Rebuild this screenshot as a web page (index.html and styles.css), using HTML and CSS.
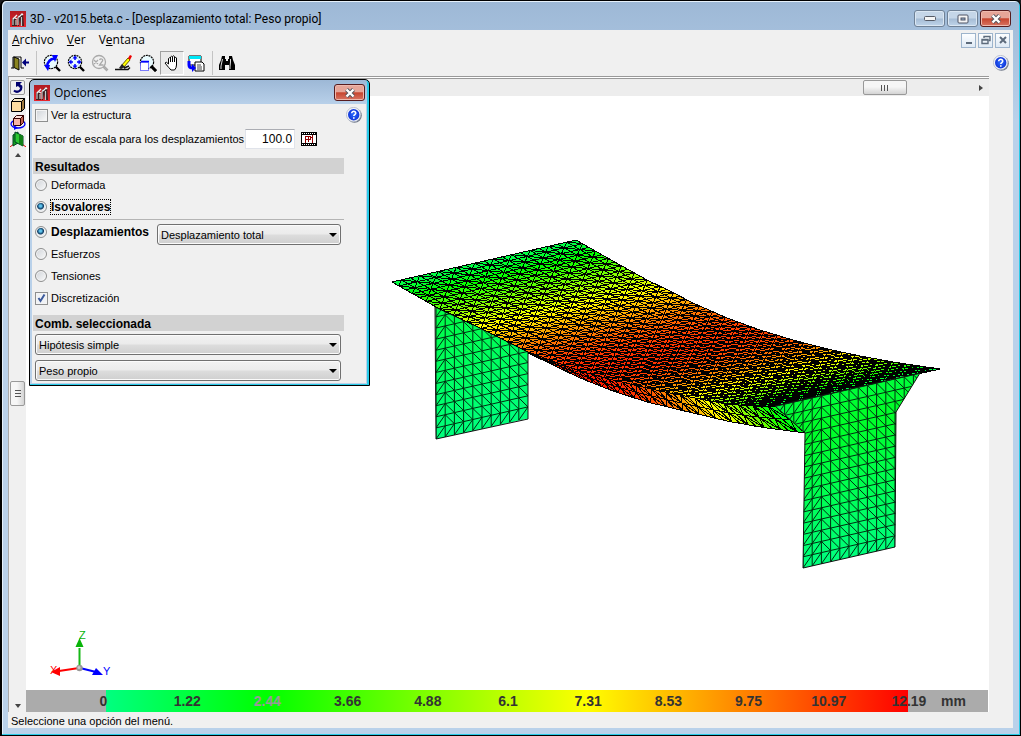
FILE: index.html
```html
<!DOCTYPE html>
<html lang="es">
<head>
<meta charset="utf-8">
<title>3D - v2015.beta.c</title>
<link rel="stylesheet" href="styles.css">
</head>
<body>
<svg class="defs" aria-hidden="true">
  <defs>
    <linearGradient id="red" x2="0" y2="1"><stop offset="0" stop-color="#b01c22"/><stop offset="1" stop-color="#e8242c"/></linearGradient>
    <radialGradient id="blue"><stop offset="0" stop-color="#2a6cff"/><stop offset="1" stop-color="#1236d8"/></radialGradient>
    <symbol id="logo" viewBox="0 0 16 16">
      <rect width="16" height="16" fill="url(#red)"/>
      <path d="M2 15V8l2-2 2 1 1 8zM8 15V6l2-3 3 0 1 12h-3l-1-6-1 6z" fill="#3b2022"/>
      <path d="M3 14V8l1-1M6 9v5M8 14V7l1-2M11.500 6v9" fill="none" stroke="#c4cccc" stroke-width="1.200"/>
      <path d="M3 8l4-4M5 7l2 1M9 6l3-3 1 1" fill="none" stroke="#eef2f2" stroke-width="1.300"/>
    </symbol>
    <symbol id="help" viewBox="0 0 16 16">
      <circle cx="8.5" cy="8.5" r="7.3" fill="#707888"/>
      <circle cx="7.6" cy="7.6" r="7.2" fill="#f2f4fa" stroke="#a8b0c0" stroke-width=".7"/>
      <circle cx="7.7" cy="7.7" r="5.7" fill="url(#blue)"/>
      <path d="M5.7 6.2c0-2.6 4.2-2.4 4 0-.1 1.4-1.9 1.3-1.9 2.9M7.8 10.3v1.5" fill="none" stroke="#fff" stroke-width="1.6"/>
    </symbol>
    <symbol id="cross" viewBox="0 0 12 10">
      <path d="M2.5 1.5l7 7m0-7l-7 7" stroke="#52555e" stroke-width="4.2"/>
      <path d="M2.5 1.5l7 7m0-7l-7 7" stroke="#fff" stroke-width="2.4"/>
    </symbol>
    <symbol id="lens" viewBox="0 0 18 18">
      <path d="M12 12l5 5" stroke="#000" stroke-width="2.4"/>
      <circle cx="8" cy="8" r="6.6" fill="#e9fbff" stroke="#000" stroke-width="1.2" stroke-dasharray="2 .7"/>
    </symbol>
  </defs>
</svg>
<div class="window">
  <header class="titlebar">
    <svg class="i16"><use href="#logo"/></svg>
    <h1>3D - v2015.beta.c - [Desplazamiento total: Peso propio]</h1>
    <div class="winbtns">
      <button class="wb" aria-label="Minimizar"><svg width="12" height="6"><rect x=".5" y=".5" width="11" height="4" rx="1" fill="#f5f5f5" stroke="#565b66"/></svg></button>
      <button class="wb" aria-label="Maximizar"><svg width="12" height="10"><rect x="1" y="1" width="10" height="8" rx="1" fill="#f5f5f5" stroke="#4c5264"/><rect x="4" y="4" width="4" height="2" fill="#9eb6d0" stroke="#4c5264"/></svg></button>
      <button class="wb close" aria-label="Cerrar"><svg width="12" height="10"><use href="#cross"/></svg></button>
    </div>
  </header>
  <div class="client">
    <nav class="menu">
      <a href="#archivo"><u>A</u>rchivo</a><a href="#ver"><u>V</u>er</a><a href="#ventana">V<u>e</u>ntana</a>
      <div class="mdi">
        <button aria-label="Minimizar documento"><svg width="12" height="12"><path d="M3 9h6" stroke="#5d6b7c" stroke-width="2"/></svg></button>
        <button aria-label="Restaurar documento"><svg width="12" height="12" fill="none" stroke="#5d6b7c"><path d="M4 4V2.500h6v4H8.500M4 2.500h6" stroke-width="1.400"/><path d="M2 5.500h6v4H2zM2 6h6" stroke-width="1.400"/></svg></button>
        <button aria-label="Cerrar documento"><svg width="12" height="12"><path d="M3 3l6 6m0-6l-6 6" stroke="#5d6b7c" stroke-width="2"/></svg></button>
      </div>
    </nav>
    <div class="tools">
      <button aria-label="Salir"><svg width="18" height="18"><path d="M2 14V3h8v11" fill="#fff" stroke="#000"/><path d="M3 3l5 2v11l-5-2.500z" fill="#8a8420" stroke="#000"/><path d="M0 14h3M10 14h3" stroke="#000"/><path d="M11 8.500l4-4v3h3v2h-3v3z" fill="#00007c"/></svg></button>
      <span class="sep"></span>
      <button aria-label="Vista anterior"><svg width="18" height="18"><use href="#lens"/><path d="M4 13C4 8 8 4 12 5" fill="none" stroke="#00f" stroke-width="2.500"/><path d="M9 1h6l-3 7zM1 11h6l-2 6z" fill="#00f"/></svg></button>
      <button aria-label="Ver todo"><svg width="18" height="18"><use href="#lens"/><path d="M8 3v3M8 10v3M3 8h3M10 8h3" stroke="#00f" stroke-width="1.500"/><path d="M8 1.500l2.500 3h-5zM8 14.500l2.500-3h-5zM1.500 8l3-2.500v5zM14.500 8l-3-2.500v5z" fill="#00f"/></svg></button>
      <button aria-label="Zoom doble"><svg width="18" height="18" fill="none" stroke="#a9a9a9" stroke-width="1.300"><circle cx="8" cy="8" r="6.500"/><path d="M12 13l4 4M13 12l4 4M3 6l4 4m0-4l-4 4M8.500 6c1-2 4-1 3 1l-3 4h4"/></svg></button>
      <button aria-label="Redibujar"><svg width="18" height="18"><path d="M6 12l7-8 2 2-6 7z" fill="#ff0" stroke="#665c00"/><path d="M13 4l2-3 2 1-2 4z" fill="#e00"/><path d="M4 14l3-4 3 3-4 2z" fill="#222"/><path d="M0 15.500h13l2-2M9 14l5-2" fill="none" stroke="#111" stroke-width="1.400"/></svg></button>
      <button aria-label="Zoom ventana"><svg width="18" height="18"><use href="#lens"/><path d="M12 12l5 5" stroke="#000" stroke-width="3"/><rect x="1.500" y="8.500" width="8" height="8" fill="#fff" stroke="#00f" stroke-dasharray="1 1"/><path d="M2 7.500h8" stroke="#00f" stroke-width="1.500"/></svg></button>
      <button class="on" aria-label="Mover"><svg width="18" height="18"><path d="M5.500 10V4.500q1-1.500 2 0V3q1-1.500 2 0v-.500q1-1.500 2 0V4q1.500-1.500 2 0v7q0 3-2 5H8q-2-2-6-7 1-2 3.500 1M7.500 4v4M9.500 3v5M11.500 4v4" fill="#fff" stroke="#000"/></svg></button>
      <button aria-label="Copiar vista"><svg width="18" height="18"><path d="M2 2h12v9H2z" fill="#fff" stroke="#000"/><path d="M2 2h12v3H2z" fill="#00e8f8"/><path d="M8 8h7l2 2v7H8z" fill="#fff" stroke="#000"/><path d="M10 11h4M10 13h5M10 15h5" stroke="#444"/><path d="M2 7v4q0 3 4 3" fill="none" stroke="#00f" stroke-width="3"/><path d="M5 10l4 4-4 4z" fill="#00f"/></svg></button>
      <span class="sep"></span>
      <button aria-label="Buscar"><svg width="18" height="18"><path d="M3 2h3v3h1v2h2V5h1V2h3l1 4 2 5v5h-6v-5H6v5H0v-5l2-5z" fill="#000"/><path d="M3.500 5L2 12v3M11.500 5v3l-.5 5v2" fill="none" stroke="#ddd"/></svg></button>
      <button class="helpbtn" aria-label="Ayuda"><svg class="i16"><use href="#help"/></svg></button>
    </div>
    <div class="work">
      <aside class="side">
        <button aria-label="Girar"><svg width="13" height="13"><path d="M3 9.500q3 2.500 6 0 2-2 1-5" fill="none" stroke="#00006e" stroke-width="2.200"/><path d="M5 6V1h6L9 3l2 2-2 2-2-2z" fill="#00006e"/></svg></button>
        <button aria-label="Vista isométrica"><svg width="16" height="16" stroke="#000"><path d="M1.500 4.500h10v10h-10z" fill="#ffdda0"/><path d="M1.500 4.500l3-3h10l-3 3z" fill="#f6e6c4"/><path d="M11.500 4.500l3-3v10l-3 3z" fill="#a07a40"/></svg></button>
        <button aria-label="Girar modelo"><svg width="16" height="16"><ellipse cx="8" cy="10" rx="7" ry="4" fill="none" stroke="#00f" stroke-width="1.300"/><path d="M3.500 4.500h7v7h-7z" fill="#f7b4a8" stroke="#300"/><path d="M3.500 4.500l3-3h7l-3 3z" fill="#ffe0d8" stroke="#300"/><path d="M10.500 4.500l3-3v7l-3 3z" fill="#c06050" stroke="#300"/><path d="M4 11l4 3-4 2z" fill="#00f"/></svg></button>
        <button aria-label="Vista 3D"><svg width="16" height="16"><path d="M0 16l5-4M16 16l-4-3" stroke="#e00"/><path d="M3 4l5-3v11l-5 3z" fill="#18a020" stroke="#042"/><path d="M5 1l8 4v10l-8-4z" fill="#2cc832" stroke="#042"/><path d="M9 3l4 2v10l-4-2z" fill="#128018"/></svg></button>
        <span class="arr up"></span>
        <span class="vthumb"></span>
        <span class="arr down"></span>
      </aside>
      <main class="view">
        <div class="hbar"><span class="hthumb"></span><span class="arr right"></span></div>
        <div class="stage">
          <svg id="model" viewBox="26 96 963 594" preserveAspectRatio="xMinYMin meet" role="img" aria-label="Modelo deformado">
            <g font-family="Liberation Sans, sans-serif" font-size="11">
              <path d="M79.500 667V648" stroke="#18b818" stroke-width="2"/><path d="M79.500 638l4 9h-8z" fill="#08b408"/>
              <path d="M79 668l-20 3" stroke="#f00" stroke-width="2"/><path d="M51 672l9-5v9z" fill="#f00"/>
              <path d="M80 668l16 4" stroke="#00f" stroke-width="2"/><path d="M103 675l-7-7-4 7z" fill="#00f"/>
              <circle cx="79.500" cy="668" r="3.200" fill="#999"/><circle cx="79" cy="667.500" r="1.500" fill="#ccc"/>
              <text x="79" y="639" fill="#08b408">Z</text><text x="50" y="674" fill="#f00">X</text><text x="103" y="675" fill="#00f">Y</text>
            </g>
          </svg>
        </div>
        <div class="bar">
          <div class="scale"><div class="ticks"><span class="zero">0</span><span>1.22</span><span class="dim">2.44</span><span>3.66</span><span>4.88</span><span>6.1</span><span>7.31</span><span>8.53</span><span>9.75</span><span>10.97</span><span>12.19</span></div></div>
          <span class="unit">mm</span>
        </div>
      </main>
    </div>
    <footer class="status">Seleccione una opción del menú.</footer>
  </div>
</div>

<section class="dialog" aria-label="Opciones">
  <header class="dtitle"><svg class="i16"><use href="#logo"/></svg><h2>Opciones</h2><button class="wb close" aria-label="Cerrar opciones"><svg width="12" height="10"><use href="#cross"/></svg></button></header>
  <form class="dbody">
    <div class="row"><label><input type="checkbox">Ver la estructura</label><button type="button" class="dhelp" aria-label="Ayuda de opciones"><svg class="i16"><use href="#help"/></svg></button></div>
    <div class="row factor"><label for="f">Factor de escala para los desplazamientos</label><input id="f" type="text" value="100.0">
      <button type="button" class="film" aria-label="Animación"><svg width="16" height="14" shape-rendering="crispEdges"><rect width="16" height="14" fill="#000"/><rect x="1" y="3" width="14" height="8" fill="#fff"/><path d="M1 1.500h14M1 12.500h14" stroke="#fff" stroke-dasharray="1 1"/><path d="M4.500 4v7M4 4.500h5M7.500 4v6M4 7.500h6M9.500 4v4M11.500 3v8M9 5.500h3" stroke="#900000" fill="none"/></svg></button></div>
    <h3 class="first">Resultados</h3>
    <div class="row"><label><input type="radio" name="r">Deformada</label></div>
    <div class="row"><label class="b"><input type="radio" name="r" checked><span class="focus">Isovalores</span></label></div>
    <hr>
    <div class="row"><label class="b"><input type="radio" name="d" checked>Desplazamientos</label>
      <span class="sel short"><select aria-label="Desplazamientos"><option>Desplazamiento total</option></select></span></div>
    <div class="row"><label><input type="radio" name="d">Esfuerzos</label></div>
    <div class="row"><label><input type="radio" name="d">Tensiones</label></div>
    <div class="row"><label><input type="checkbox" checked>Discretización</label></div>
    <h3 class="second">Comb. seleccionada</h3>
    <span class="sel"><select aria-label="Combinación"><option>Hipótesis simple</option></select></span>
    <span class="sel"><select aria-label="Hipótesis"><option>Peso propio</option></select></span>
  </form>
</section>
<script src="model.js"></script>
</body>
</html>
```
FILE: styles.css
```css
* { box-sizing: border-box; }
html, body { height: 100%; margin: 0; }
body { background: #1c1c20; font: 11px/14px "Liberation Sans", Arial, sans-serif; color: #000; }
button { padding: 0; border: 0; background: none; font: inherit; display: grid; place-items: center; }
svg { display: block; }
h1, h2, h3 { margin: 0; font-size: 12px; font-weight: 400; }
.defs { position: absolute; width: 0; height: 0; }
.i16 { width: 16px; height: 16px; flex: none; }

.window { height: 100vh; display: flex; flex-direction: column; padding: 0 7px 7px 6px; border: 1px solid #000; border-left-width: 2px; border-radius: 6px 6px 0 0; background: linear-gradient(#9db8d6, #b9d1ea 120px); box-shadow: inset -1px -1px #29cbe8, inset 1px 1px #e6f1fb; }
.titlebar { height: 29px; flex: none; display: flex; align-items: center; gap: 4px; padding: 6px 2px 0 2px; }
h2, .menu { font: 12px/16px "Open Sans", "Noto Sans", sans-serif; }
h1 { flex: 1; font: 12px/16px Roboto, "Open Sans", sans-serif; white-space: nowrap; }
.winbtns { display: flex; gap: 2px; }
.wb { width: 31px; height: 17px; border: 1px solid #6f8196; border-radius: 3px; background: linear-gradient(#c5d6e8 48%, #a5bcd5 52%, #bfd4ea); box-shadow: inset 0 0 0 1px #dbe7f3; }
.wb.close { border-color: #571c1e; background: linear-gradient(#e6a598 45%, #c6452f 52%, #d87463); box-shadow: inset 0 0 0 1px #eeb9ae; }

.client { flex: 1; min-height: 0; display: flex; flex-direction: column; background: #f0f0f0; }
.menu { height: 20px; flex: none; display: flex; align-items: center; gap: 13px; padding: 0 3px 0 4px; }
.menu a { color: #000; text-decoration: none; }
.mdi { display: flex; gap: 2px; margin-left: auto; }
.mdi button { width: 15px; height: 15px; border: 1px solid #9db4cc; background: linear-gradient(#fdfeff, #dfeaf5); }
.tools { height: 26px; flex: none; display: flex; align-items: center; padding: 0 4px 0 0; }
.tools button { width: 24px; height: 24px; flex: none; }
.tools .on { border: 1px solid #a0a0a0; border-right-color: #fff; border-bottom-color: #fff; background: #eaeaea; }
.sep { width: 8px; height: 24px; flex: none; background: linear-gradient(#c4c4c4, #c4c4c4) 4px 0 / 1px 100% no-repeat; }
.tools .helpbtn { width: 16px; margin-left: auto; }
.work { flex: 1; min-height: 0; display: flex; padding-right: 24px; }
.side { width: 18px; flex: none; display: flex; flex-direction: column; align-items: center; padding: 3px 0 4px; border-left: 1px solid #aaa; border-top: 1px solid #999; }
.side::before { content: ""; flex: 3; order: 1; }
.side::after { content: ""; flex: 4; order: 3; }
.side button { width: 16px; height: 17px; flex: none; }
.side button:first-child { width: 15px; height: 15px; border: 1px solid #999; border-radius: 2px; margin: 0 0 1px; }
.arr { width: 0; height: 0; flex: none; border: 3px solid transparent; }
.up { border-bottom: 4px solid #444; border-top: 0; margin-top: 6px; }
.down { border-top: 4px solid #444; border-bottom: 0; order: 4; }
.right { border-left: 4px solid #444; border-right: 0; margin-right: 6px; }
.vthumb { order: 2; width: 15px; height: 25px; flex: none; border: 1px solid #999; border-radius: 2px; background: linear-gradient(#555, #555) 4px 8px / 6px 1px no-repeat, linear-gradient(#555, #555) 4px 11px / 6px 1px no-repeat, linear-gradient(#555, #555) 4px 14px / 6px 1px no-repeat, linear-gradient(90deg, #f6f6f6 45%, #d4d4d4); }
.view { flex: 1; min-width: 0; display: flex; flex-direction: column; background: #fff; }
.hbar { height: 20px; flex: none; display: flex; align-items: center; justify-content: flex-end; border-top: 1px solid #999; box-shadow: inset 0 1px #fff, inset 0 2px #999; background: #ededed; padding-top: 2px; }
.hthumb { width: 44px; height: 15px; margin-right: 72px; border: 1px solid #999; border-radius: 2px; background: linear-gradient(#555, #555) 17px 4px / 1px 6px no-repeat, linear-gradient(#555, #555) 20px 4px / 1px 6px no-repeat, linear-gradient(#555, #555) 23px 4px / 1px 6px no-repeat, linear-gradient(#f6f6f6 45%, #d4d4d4); }
.stage { flex: 1; min-height: 0; }
.stage svg { width: 100%; height: 100%; }
.bar { height: 22px; flex: none; display: flex; margin: 0 1px 0 0; padding-left: 80px; background: #ababab; color: #333; font: bold 14px/22px "Liberation Sans", Arial, sans-serif; }
.scale { flex: 1; background: linear-gradient(90deg, #00ff80, #00ff00 20%, #ffff00 60%, #ff8000 80%, #ff0000); }
.ticks { display: grid; grid-template-columns: repeat(11, 1fr); margin: 0 -41px 0 -39px; text-align: center; }
.ticks .zero { text-align: right; padding-right: 40px; }
.dim { color: #999; }
.unit { width: 80px; padding-left: 33px; }
.status { height: 16px; flex: none; padding: 2px 3px 0; }

.dialog { position: absolute; left: 29px; top: 79px; width: 341px; padding: 0 4px 2px 3px; border: 1px solid #000; border-radius: 5px 5px 0 0; background: linear-gradient(#9db8d6, #b9d1ea 25px); box-shadow: inset -2px -1px #29cbe8; }
.dtitle { height: 24px; display: flex; align-items: center; gap: 4px; padding: 1px 0 0 1px; }
h2 { flex: 1; }
.dbody { display: flex; flex-direction: column; background: #f0f0f0; margin: 0 -1px; padding-left: 1px; }
.row { height: 22px; display: flex; align-items: center; padding-left: 2px; }
.row label { display: flex; align-items: center; }
.row input:not([type=text]) { appearance: none; width: 13px; height: 13px; margin: 0 3px 0 0; border: 1px solid #8e8f8f; background: linear-gradient(135deg, #cfd3d8, #fafafa); box-shadow: inset 0 0 0 1px #f4f4f4; }
.row input[type=radio] { width: 12px; height: 12px; margin-right: 4px; border-radius: 50%; }
.row input[type=radio]:checked { background: radial-gradient(circle at 45% 40%, #5fc4ee 0 1px, #0c3a62 3px, #e8ebee 4px); }
.row input[type=checkbox]:checked { background: url("data:image/svg+xml,%3Csvg xmlns='http://www.w3.org/2000/svg' viewBox='0 0 11 11'%3E%3Cpath d='M2.500 5l2 3L8.500 1.500' fill='none' stroke='%233c5a9c' stroke-width='2'/%3E%3C/svg%3E"), #f0f2f5; }
.dhelp { margin: 0 4px 0 auto; }
.factor { margin-top: 2px; }
.factor input { width: 50px; height: 20px; margin-left: 1px; padding: 0 2px; border: 1px solid #e0e3ea; border-top-color: #abadb3; background: #fff; font: 12px/14px "Liberation Sans", Arial, sans-serif; text-align: right; }
.film { margin-left: 6px; }
h3 { height: 16px; margin-right: 22px; padding-left: 2px; background: #d2d2d2; font: bold 12px/18px "Liberation Sans", Arial, sans-serif; }
.first { margin-top: 8px; }
.second { margin-top: 6px; margin-bottom: 3px; }
.b { font: bold 12px/14px "Liberation Sans", Arial, sans-serif; }
.focus { outline: 1px dotted #000; }
hr { height: 1px; margin: 1px 22px 1px 0; border: 0; background: #b4b4b4; }
.sel { position: relative; height: 21px; flex: none; margin: 0 25px 5px 2px; }
.sel:last-child { margin-bottom: 2px; }
.sel.short { width: 184px; margin: 5px 25px 0 auto; }
.sel select { appearance: none; width: 100%; height: 21px; padding: 0 3px; border: 1px solid #707070; border-radius: 3px; background: linear-gradient(#f2f2f2, #ebebeb 48%, #dddddd 52%, #cfcfcf); box-shadow: inset 0 0 0 1px #fbfbfb; color: #000; font: inherit; }
.sel::after { content: ""; position: absolute; right: 4px; top: 9px; border: 4px solid transparent; border-top-color: #000; border-bottom: 0; pointer-events: none; }
```
FILE: model.js
```js
const NS = "http://www.w3.org/2000/svg";
const root = document.getElementById("model");

function add(parent, tag, attrs) {
  const e = document.createElementNS(NS, tag);
  for (const k in attrs) e.setAttribute(k, attrs[k]);
  parent.appendChild(e);
  return e;
}

// Isovalue colour, t from 0 to 1.
const stops = [[0, 0, 255, 128], [0.2, 0, 255, 0], [0.6, 255, 255, 0], [0.8, 255, 128, 0], [1, 255, 0, 0]];
function colour(t) {
  t = Math.max(0, Math.min(1, t));
  let i = 1;
  while (t > stops[i][0]) i++;
  const a = stops[i - 1], b = stops[i], k = (t - a[0]) / (b[0] - a[0]);
  return "rgb(" + [1, 2, 3].map(n => Math.round(a[n] + (b[n] - a[n]) * k)) + ")";
}

// Point on a polyline at fraction u of its horizontal extent.
function on(line, u) {
  const x = line[0][0] + (line[line.length - 1][0] - line[0][0]) * u;
  let i = 1;
  while (i < line.length - 1 && x > line[i][0]) i++;
  const a = line[i - 1], b = line[i];
  return [x, a[1] + (b[1] - a[1]) * (x - a[0]) / (b[0] - a[0])];
}

// Triangulated strip between two edges.
function patch(near, far, cols, rows, value) {
  const g = add(root, "g", { "shape-rendering": "crispEdges" });
  const pt = (i, j) => {
    const a = on(near, i / cols), b = on(far, i / cols), v = j / rows;
    return [a[0] + (b[0] - a[0]) * v, a[1] + (b[1] - a[1]) * v].map(n => n.toFixed(1)).join(" ");
  };
  let lines = "";
  for (let j = rows - 1; j >= 0; j--) {
    for (let i = 0; i < cols; i++) {
      const a = pt(i, j), b = pt(i + 1, j), c = pt(i + 1, j + 1), d = pt(i, j + 1);
      const fill = colour(value((i + 0.5) / cols, (j + 0.5) / rows));
      add(g, "path", { d: `M${a}L${b}L${c}L${d}Z`, fill, stroke: fill });
      lines += `M${a}L${b}L${c}L${d}Z` + ((i + j) % 2 ? `M${a}L${c}` : `M${b}L${d}`);
    }
  }
  add(g, "path", { d: lines, fill: "none", stroke: "#000", "stroke-width": 1 });
}

// Vertical slab drawn as a regular grid cut to its outline.
function pier(id, outline, x0, y0, cols, rows, dy, value) {
  const clip = add(root, "clipPath", { id });
  add(clip, "polygon", { points: outline });
  const g = add(root, "g", { "clip-path": `url(#${id})` });
  const dx = 9.2, sy = -2.1;
  let lines = "";
  for (let j = 0; j < rows; j++) {
    for (let i = 0; i < cols; i++) {
      const p = (a, b) => `${(x0 + a * dx).toFixed(1)} ${(y0 + a * sy + b * dy).toFixed(1)}`;
      const a = p(i, j), b = p(i + 1, j), c = p(i + 1, j + 1), d = p(i, j + 1);
      const fill = colour(value(j / rows));
      add(g, "path", { d: `M${a}L${b}L${c}L${d}Z`, fill, stroke: fill });
      lines += `M${a}L${b}M${a}L${d}` + (x0 + i * dx < Number(outline.split(" ").pop().split(",")[0]) + 8 || j === rows - 1 ? `M${b}L${d}` : `M${a}L${c}`);
    }
  }
  add(g, "path", { d: lines, fill: "none", stroke: "#002c10", "stroke-width": 1 });
  add(root, "polygon", { points: outline, fill: "none", stroke: "#111", "stroke-width": 1 });
}

const nearEdge = [[392, 282], [436, 307], [480, 328], [528, 352], [580, 371], [613, 380], [660, 391], [700, 399], [727, 404], [750, 406], [775, 406]];
const farEdge = [[576, 240], [613, 261], [647, 280], [670, 291], [693, 303], [727, 318], [760, 330], [793, 340], [827, 349], [860, 356], [893, 362], [940, 369]];
const webTop = nearEdge.slice(3);
const webBottom = [[528, 353], [580, 378], [613, 391], [647, 402], [693, 413], [727, 421], [760, 427], [805, 433]];

pier("p1", "435,307 480,328 528,352 528,419 436,439", 436, 439 - 13 * 11.1, 10, 13, 11.1, t => 0.1 * (1 - t));
patch(webBottom, webTop, 34, 2, u => 0.14 + 0.82 * Math.sin(Math.PI * (0.34 + 0.66 * u)));
patch(nearEdge, farEdge, 56, 20, (u, v) => 0.08 + (0.86 - 0.04 * v) * Math.pow(Math.sin(Math.PI * u), 1.15));
pier("p2", "775,406 920,373 896,412 895,547 803,568 805,433", 775.4, 574.3 - 15 * 11.2, 17, 15, 11.2, t => 0.14 - Math.abs(t - 0.16) * 0.17);
```
